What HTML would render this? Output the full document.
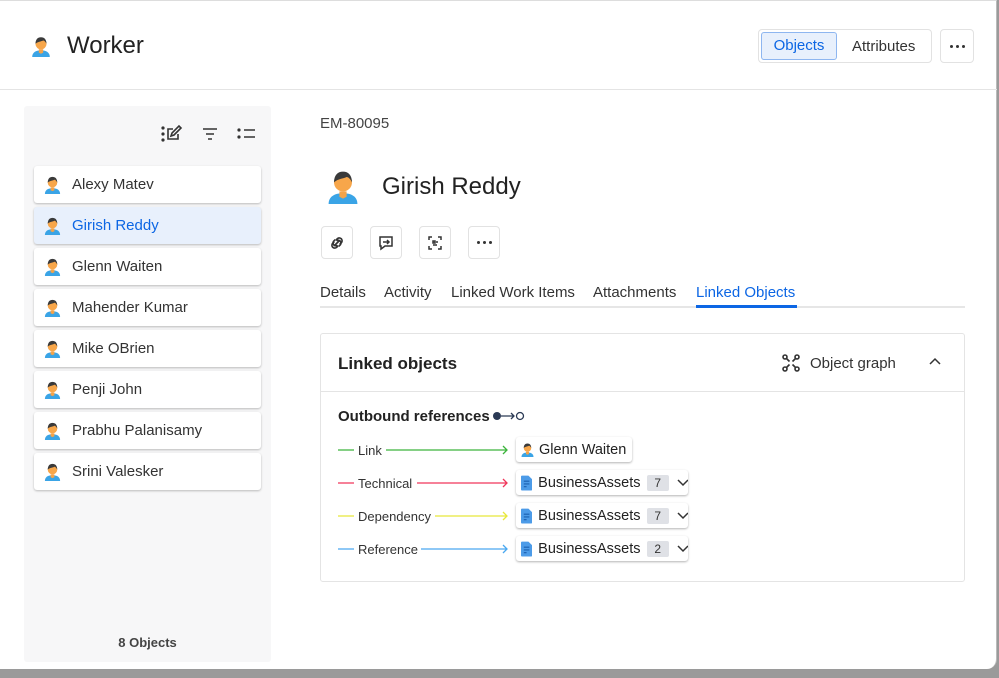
<!DOCTYPE html>
<html><head><meta charset="utf-8"><style>
*{box-sizing:border-box;margin:0;padding:0}
body{width:999px;height:678px;overflow:hidden;background:#9a9a9a;font-family:"Liberation Sans",Arial,sans-serif;color:#172b4d;position:relative}
.win{position:absolute;left:0;top:0;width:997px;height:669px;background:#fff;border-right:1px solid #bbb;border-top:1px solid #ddd;border-bottom-right-radius:10px}
.abs{position:absolute}
.hdr{left:0;top:88px;width:997px;height:1px;background:#e4e4e4}
.side{left:24px;top:105px;width:247px;height:556px;background:#f7f7f8;border-radius:3px}
.item{position:absolute;left:10px;width:227px;height:37px;background:#fff;border-radius:3px;box-shadow:0 1px 2px rgba(0,0,0,.25);font-size:15px;color:#333;display:flex;align-items:center;padding-left:9px}
.item svg{margin-right:10px}
.item.sel{background:#e8f0fc;color:#0c66e4}
.btn{position:absolute;top:225px;width:32px;height:33px;border:1px solid #e2e2e2;border-radius:4px;display:flex;align-items:center;justify-content:center}
.dots{display:flex;gap:3px}
.dots i{width:3px;height:3px;border-radius:50%;background:#333;display:block}
.tab{position:absolute;top:283px;font-size:15px;color:#333}
.ref{position:absolute;left:338px;font-size:13px;color:#333;height:18px;display:flex;align-items:center}
.chip{position:absolute;left:516px;height:25px;background:#fff;border-radius:3px;box-shadow:0 1px 2px rgba(0,0,0,.3);display:flex;align-items:center;padding-left:4px;font-size:14.5px;color:#222}
.cnt{background:#dfe1e6;border-radius:2px;width:24px;height:16px;font-size:12px;text-align:center;line-height:16px;margin-left:6px;color:#333}
</style></head><body>
<svg width="0" height="0" style="position:absolute"><defs>
<symbol id="av" viewBox="0 0 20 20"><path d="M2 20c0-4 3-6 8-6s8 2 8 6z" fill="#3aa4e6"/><path d="M8 13h4v3l-2 1-2-1z" fill="#f3a34a"/><circle cx="10" cy="8" r="5" fill="#f7a64a"/><path d="M5 8c0-4 2-6 5-6s5 2 5 6c-1-2-2-3-3-3-2 1-5 1-7 3z" fill="#3a3a3a"/></symbol>
<symbol id="doc" viewBox="0 0 12 16"><path d="M0 1a1 1 0 011-1h7l4 4v11a1 1 0 01-1 1H1a1 1 0 01-1-1z" fill="#4c9be8"/><path d="M3 6h6M3 9h6M3 12h3" stroke="#1a5fb0" stroke-width="1.2"/></symbol>
</defs></svg>
<div class="win">
<svg class="abs" style="left:30px;top:34px" width="22" height="22"><use href="#av"/></svg>
<div class="abs" style="left:67px;top:31px;font-size:24px;color:#222">Worker</div>
<div class="abs" style="left:758px;top:28px;width:174px;height:34px;border:1px solid #e2e2e2;border-radius:4px"></div>
<div class="abs" style="left:761px;top:31px;width:76px;height:28px;background:#e8f0fc;border:1px solid #8eb6f0;border-radius:3px;color:#0c66e4;font-size:15px;text-align:center;line-height:26px">Objects</div>
<div class="abs" style="left:852px;top:37px;font-size:15px;color:#333">Attributes</div>
<div class="abs" style="left:940px;top:28px;width:34px;height:34px;border:1px solid #e2e2e2;border-radius:4px;display:flex;align-items:center;justify-content:center"><span class="dots"><i></i><i></i><i></i></span></div>
<div class="abs hdr"></div>
<div class="abs side">
<svg class="abs" style="left:137px;top:18px" width="22" height="20" fill="none" stroke="#333" stroke-width="1.6"><circle cx="2" cy="4" r=".8"/><circle cx="2" cy="10" r=".8"/><circle cx="2" cy="16" r=".8"/><path d="M12 5H7v10h10v-5M10 12l1-3 7-7 2 2-7 7z"/></svg>
<svg class="abs" style="left:177px;top:20px" width="18" height="16" stroke="#333" stroke-width="1.6"><path d="M2 3h14M5 8h8M7 13h4"/></svg>
<svg class="abs" style="left:213px;top:20px" width="20" height="16" stroke="#333" stroke-width="1.6"><circle cx="2" cy="4" r=".8"/><circle cx="2" cy="11" r=".8"/><path d="M7 4h11M7 11h11"/></svg>
<div class="item" style="top:60px"><svg width="19" height="19"><use href="#av"/></svg>Alexy Matev</div>
<div class="item sel" style="top:101px"><svg width="19" height="19"><use href="#av"/></svg>Girish Reddy</div>
<div class="item" style="top:142px"><svg width="19" height="19"><use href="#av"/></svg>Glenn Waiten</div>
<div class="item" style="top:183px"><svg width="19" height="19"><use href="#av"/></svg>Mahender Kumar</div>
<div class="item" style="top:224px"><svg width="19" height="19"><use href="#av"/></svg>Mike OBrien</div>
<div class="item" style="top:265px"><svg width="19" height="19"><use href="#av"/></svg>Penji John</div>
<div class="item" style="top:306px"><svg width="19" height="19"><use href="#av"/></svg>Prabhu Palanisamy</div>
<div class="item" style="top:347px"><svg width="19" height="19"><use href="#av"/></svg>Srini Valesker</div>
<div class="abs" style="left:0;width:247px;top:529px;text-align:center;font-size:13px;font-weight:bold;color:#444">8 Objects</div>
</div>
<div class="abs" style="left:320px;top:114px;font-size:15px;color:#444">EM-80095</div>
<svg class="abs" style="left:324px;top:167px" width="38" height="36"><use href="#av"/></svg>
<div class="abs" style="left:382px;top:172px;font-size:24px;color:#222">Girish Reddy</div>
<div class="btn" style="left:321px"><svg width="18" height="18" viewBox="0 0 16 16" fill="none" stroke="#333" stroke-width="1.5"><path d="M6 10l4-4M6.5 5L5 6.5a2.5 2.5 0 003.5 3.5M9.5 11L11 9.5A2.5 2.5 0 007.5 6"/><path d="M7 5.5l1.5-1.5a2.5 2.5 0 013.5 3.5L10.5 9M9 10.5L7.5 12A2.5 2.5 0 014 8.5L5.5 7"/></svg></div>
<div class="btn" style="left:370px"><svg width="18" height="18" fill="none" stroke="#333" stroke-width="1.5"><path d="M3 3h12v9H8l-4 3v-3H3zM6 8h6M10 6l2 2-2 2"/></svg></div>
<div class="btn" style="left:419px"><svg width="18" height="18" fill="none" stroke="#333" stroke-width="1.5"><path d="M3 6V3h3M12 3h3v3M15 12v3h-3M6 15H3v-3M7 7h2v2H7zM11 7v2M7 11h4"/></svg></div>
<div class="btn" style="left:468px"><span class="dots"><i></i><i></i><i></i></span></div>
<div class="tab" style="left:320px">Details</div>
<div class="tab" style="left:384px">Activity</div>
<div class="tab" style="left:451px">Linked Work Items</div>
<div class="tab" style="left:593px">Attachments</div>
<div class="tab" style="left:696px;color:#0c66e4">Linked Objects</div>
<div class="abs" style="left:320px;top:305px;width:645px;height:2px;background:#e6e6e6"></div>
<div class="abs" style="left:696px;top:304px;width:101px;height:3px;background:#0c66e4"></div>
<div class="abs" style="left:320px;top:332px;width:645px;height:249px;border:1px solid #e4e4e4;border-radius:3px"></div>
<div class="abs" style="left:321px;top:390px;width:643px;height:1px;background:#e4e4e4"></div>
<div class="abs" style="left:338px;top:353px;font-size:17px;font-weight:bold;color:#222">Linked objects</div>
<svg class="abs" style="left:782px;top:353px" width="18" height="18" fill="none" stroke="#333" stroke-width="1.6"><circle cx="3" cy="3" r="2"/><circle cx="15" cy="3" r="2"/><circle cx="3" cy="15" r="2"/><circle cx="15" cy="15" r="2"/><path d="M4.5 4.5l3 3M13.5 4.5l-3 3M4.5 13.5l3-3M13.5 13.5l-3-3"/></svg>
<div class="abs" style="left:810px;top:354px;font-size:15px;color:#333">Object graph</div>
<svg class="abs" style="left:929px;top:356px" width="12" height="10" fill="none" stroke="#333" stroke-width="1.5"><path d="M1 7l5-5 5 5"/></svg>
<div class="abs" style="left:338px;top:407px;font-size:15px;font-weight:bold;color:#222">Outbound references</div>
<svg class="abs" style="left:492px;top:409px" width="34" height="12"><circle cx="5" cy="6" r="4" fill="#2b3a55"/><path d="M9 6h13M19 3l3 3-3 3" stroke="#2b3a55" stroke-width="1.3" fill="none"/><circle cx="28" cy="6" r="3.5" fill="none" stroke="#2b3a55" stroke-width="1.3"/></svg>
<svg class="abs" style="left:338px;top:440px" width="172" height="120" fill="none" stroke-width="1.3">
<path d="M0 9h16M48 9h121M165 5l4 4-4 4" stroke="#3cb43c"/>
<path d="M0 42h16M79 42h90M165 38l4 4-4 4" stroke="#f0365a"/>
<path d="M0 75h16M97 75h72M165 71l4 4-4 4" stroke="#e8e83a"/>
<path d="M0 108h16M83 108h86M165 104l4 4-4 4" stroke="#4aa8f0"/>
</svg>
<div class="ref" style="top:440px;left:358px">Link</div>
<div class="ref" style="top:473px;left:358px">Technical</div>
<div class="ref" style="top:506px;left:358px">Dependency</div>
<div class="ref" style="top:539px;left:358px">Reference</div>
<div class="chip" style="top:436px;width:116px"><svg width="15" height="15" style="margin-right:4px"><use href="#av"/></svg>Glenn Waiten</div>
<div class="chip" style="top:469px;width:172px"><svg width="12" height="16" style="margin:0 6px 0 1px"><use href="#doc"/></svg>BusinessAssets<span class="cnt">7</span><svg width="12" height="8" style="margin-left:8px" fill="none" stroke="#333" stroke-width="1.5"><path d="M1 1l5 5 5-5"/></svg></div>
<div class="chip" style="top:502px;width:172px"><svg width="12" height="16" style="margin:0 6px 0 1px"><use href="#doc"/></svg>BusinessAssets<span class="cnt">7</span><svg width="12" height="8" style="margin-left:8px" fill="none" stroke="#333" stroke-width="1.5"><path d="M1 1l5 5 5-5"/></svg></div>
<div class="chip" style="top:535px;width:172px"><svg width="12" height="16" style="margin:0 6px 0 1px"><use href="#doc"/></svg>BusinessAssets<span class="cnt">2</span><svg width="12" height="8" style="margin-left:8px" fill="none" stroke="#333" stroke-width="1.5"><path d="M1 1l5 5 5-5"/></svg></div>
</div>
</body></html>
